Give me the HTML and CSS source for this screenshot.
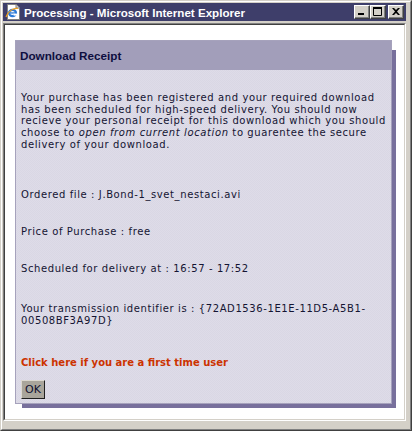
FILE: index.html
```html
<!DOCTYPE html>
<html>
<head>
<meta charset="utf-8">
<title>Processing - Microsoft Internet Explorer</title>
<link rel="stylesheet" href="styles.css">
</head>
<body>
<div class="window">
  <div class="frame">
    <div class="titlebar">
      <svg class="app-icon" width="16" height="16" viewBox="0 0 16 16">
        <path d="M2.5 0.5 H11 L14.5 4 V15.5 H2.5 Z" fill="#ffffff" stroke="#808080"/>
        <path d="M11 0.5 V4 H14.5" fill="#d4d0c8" stroke="#808080"/>
        <ellipse cx="7.5" cy="9" rx="4.6" ry="4.2" fill="#2a7ad8"/>
        <ellipse cx="7.5" cy="9" rx="2.3" ry="2" fill="#ffffff"/>
        <rect x="4.5" y="8.3" width="6.5" height="1.3" fill="#2a7ad8"/>
        <rect x="8.6" y="9.6" width="3.4" height="2" fill="#ffffff"/>
        <path d="M1 13 C3 7 9 3.5 13 4.5" fill="none" stroke="#f0a020" stroke-width="1.2"/>
      </svg>
      <span class="title">Processing - Microsoft Internet Explorer</span>
      <div class="controls">
        <span class="cbtn">
          <svg width="8" height="7" viewBox="0 0 8 7"><rect x="0" y="5" width="6" height="2" fill="#000"/></svg>
        </span>
        <span class="cbtn">
          <svg width="9" height="9" viewBox="0 0 9 9"><path d="M0.5 0.5 H8.5 V8.5 H0.5 Z" fill="none" stroke="#000"/><rect x="0" y="0" width="9" height="2" fill="#000"/></svg>
        </span>
        <span class="cbtn close">
          <svg width="8" height="7" viewBox="0 0 8 7"><path d="M0 0 H2 L4 2 L6 0 H8 L5 3.5 L8 7 H6 L4 5 L2 7 H0 L3 3.5 Z" fill="#000"/></svg>
        </span>
      </div>
    </div>
    <div class="client">
      <div class="client-inner">
        <div class="panel-wrap">
          <div class="panel">
            <div class="panel-head">Download Receipt</div>
            <div class="panel-body">
              <div class="p p1">Your purchase has been registered and your required download<br>has been scheduled for high-speed delivery. You should now<br>recieve your personal receipt for this download which you should<br>choose to <em>open from current location</em> to guarentee the secure<br>delivery of your download.</div>
              <div class="p p2">Ordered file : J.Bond-1_svet_nestaci.avi</div>
              <div class="p p3">Price of Purchase : free</div>
              <div class="p p4">Scheduled for delivery at : 16:57 - 17:52</div>
              <div class="p p5">Your transmission identifier is : {72AD1536-1E1E-11D5-A5B1-<br>00508BF3A97D}</div>
              <div class="p first-time">Click here if you are a first time user</div>
              <div class="btn-row"><span class="ok">OK</span></div>
            </div>
          </div>
        </div>
      </div>
    </div>
  </div>
</div>
</body>
</html>
```
FILE: styles.css
```css
html, body {
  margin: 0;
  padding: 0;
  background: #d4d0c8;
}
.window {
  width: 412px;
  height: 431px;
  box-sizing: border-box;
  border: 1px solid;
  border-color: #d4d0c8 #404040 #404040 #d4d0c8;
  background: #d4d0c8;
}
.frame {
  height: 100%;
  box-sizing: border-box;
  border: 1px solid;
  border-color: #ffffff #808080 #808080 #ffffff;
  padding: 1px 4px 8px 1px;
  display: flex;
  flex-direction: column;
}
.titlebar {
  height: 18px;
  flex: none;
  background: #3e3e6a;
  display: flex;
  align-items: center;
  padding: 0 2px 0 2px;
}
.app-icon {
  flex: none;
  margin-right: 3px;
}
.title {
  font-family: "Liberation Sans", Arial, sans-serif;
  font-weight: bold;
  font-size: 11.6px;
  color: #ffffff;
  white-space: nowrap;
  flex: 1;
  padding-top: 1px;
}
.controls {
  display: flex;
  align-items: center;
}
.cbtn {
  width: 16px;
  height: 14px;
  box-sizing: border-box;
  background: #d4d0c8;
  border: 1px solid;
  border-color: #ffffff #404040 #404040 #ffffff;
  box-shadow: inset -1px -1px 0 #808080;
  display: flex;
  align-items: center;
  justify-content: center;
  padding: 0 1px 1px 0;
}
.cbtn.close {
  margin-left: 2px;
}
.client {
  flex: 1;
  margin-top: 2px;
  border: 1px solid;
  border-color: #808080 #ffffff #ffffff #808080;
  display: flex;
}
.client-inner {
  flex: 1;
  border: 1px solid;
  border-color: #404040 #d4d0c8 #d4d0c8 #404040;
  background: #ffffff;
  padding: 15px 11px 0 10px;
}
.panel-wrap {
  position: relative;
  width: 377px;
}
.panel-wrap::before {
  content: "";
  position: absolute;
  left: 7px;
  top: 10px;
  right: -4px;
  bottom: -4px;
  background: #78709c;
}
.panel {
  position: relative;
  border: 1px solid #a6a2bc;
  background: #dcdae6;
}
.panel-head {
  height: 29px;
  background: #a29eba;
  font-family: "Liberation Sans", Arial, sans-serif;
  font-weight: bold;
  font-size: 11.7px;
  color: #0e0e40;
  display: flex;
  align-items: center;
  padding-left: 4px;
}
.panel-body {
  background-color: #dcdae6;
  background-image: repeating-conic-gradient(#dedce8 0 25%, #d9d7e4 0 50%);
  background-size: 2px 2px;
  padding: 22px 0 4px 5px;
  font-family: "DejaVu Sans", Verdana, sans-serif;
  font-size: 10px;
  line-height: 11.67px;
  letter-spacing: 0.6px;
  color: #141432;
}
.p2 { margin-top: 39px; }
.p3 { margin-top: 25.4px; }
.p4 { margin-top: 25.3px; }
.p5 { margin-top: 28.4px; }
.first-time {
  margin-top: 30.5px;
  color: #cc3300;
  font-weight: bold;
  letter-spacing: 0;
}
.btn-row {
  margin-top: 11px;
  display: flex;
}
.ok {
  width: 24px;
  height: 19px;
  box-sizing: border-box;
  background: #a9a59b;
  border: 1px solid;
  border-color: #dcd8d0 #202020 #202020 #dcd8d0;
  font-family: "DejaVu Sans", Verdana, sans-serif;
  font-size: 11px;
  letter-spacing: 0;
  color: #101030;
  display: flex;
  align-items: center;
  justify-content: center;
}
```
